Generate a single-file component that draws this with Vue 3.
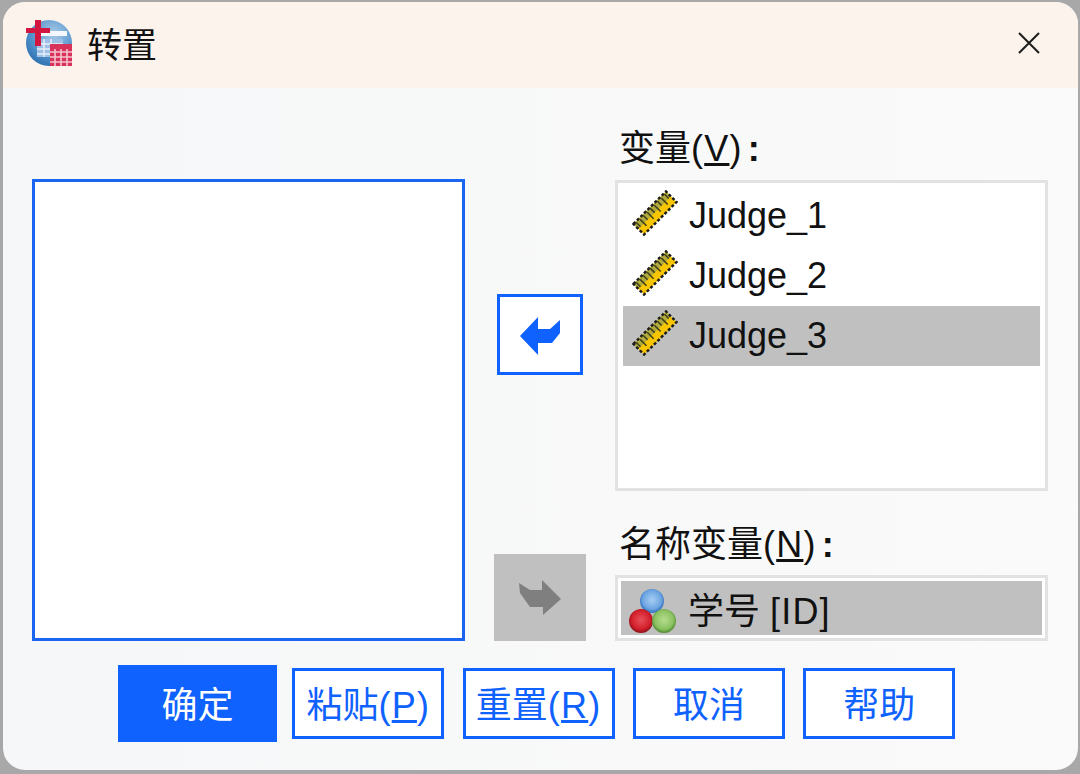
<template>
  <div class="window">
    <!-- title bar -->
    <header class="title-bar">
      <svg class="app-icon" width="48" height="48" viewBox="0 0 48 48">
        <defs>
          <radialGradient id="globe" cx="0.6" cy="0.3" r="0.85">
            <stop offset="0" stop-color="#a9cbe8" />
            <stop offset="0.6" stop-color="#4d8fc9" />
            <stop offset="1" stop-color="#1f5fa3" />
          </radialGradient>
        </defs>
        <circle cx="24" cy="24" r="23" fill="url(#globe)" />
        <rect x="14" y="12" width="28" height="5" fill="#f4f7fb" />
        <rect x="12" y="20" width="26" height="18" fill="#9fc0e6" />
        <path d="M12 25h26M12 30h26M12 35h26M19 20v18M26 20v18" stroke="#e6eff9" stroke-width="1.5" />
        <rect x="1" y="9" width="24" height="5" fill="#d3163f" />
        <rect x="10" y="1" width="6" height="26" fill="#d3163f" />
        <rect x="25" y="25" width="22" height="22" fill="#d8315a" />
        <path d="M25 33h22M25 38h22M25 43h22M30 30v17M36 30v17M42 30v17" stroke="#f6c3cf" stroke-width="1.6" />
      </svg>
      <span class="title">转置</span>
      <svg class="close" width="24" height="24" viewBox="0 0 24 24">
        <path d="M2 2 22 22M22 2 2 22" stroke="#1c1c1c" stroke-width="2" fill="none" />
      </svg>
    </header>

    <!-- main area -->
    <main class="main">
      <div class="target-list"></div>

      <div class="move-col">
        <button class="move-btn" type="button">
          <svg width="40" height="40" viewBox="0 0 40 40">
            <polygon points="0,21 18,2 18,14 30,14 40,5 40,18 32,28 18,28 18,40" fill="#0f62fe" />
          </svg>
        </button>
        <button class="move-btn disabled" type="button">
          <svg width="42" height="36" viewBox="0 0 42 36">
            <polygon points="0,3 11,10 23,10 23,0 42,19 24,35 24,27 11,27 1,13" fill="#7f7f7f" />
          </svg>
        </button>
      </div>

      <div class="source-col">
        <label class="field-label">变量<span class="mnemonic">(<u>V</u>)</span><b class="colon">:</b></label>
        <ul class="var-list">
          <li v-for="name in variables" :key="name" class="var-row" :class="{ selected: name === selected }">
            <svg class="ruler" width="46" height="46" viewBox="0 0 46 46">
              <g transform="rotate(-45 23 23)">
                <rect x="0" y="15.5" width="46" height="15" fill="#f7c600" />
                <rect x="0" y="15.5" width="46" height="7" fill="#b0ab3c" />
                <path d="M3 22.5v-6M8 26v-9M13 22.5v-6M18 26v-9M23 22.5v-6M28 26v-9M33 22.5v-6M38 26v-9M43 22.5v-6" stroke="#3c3c1c" stroke-width="1.5" />
                <rect x="0" y="15.5" width="46" height="15" fill="none" stroke="#1d1d1d" stroke-width="2.5" stroke-dasharray="3 2" />
              </g>
            </svg>
            <span>{{ name }}</span>
          </li>
        </ul>
        <label class="field-label name-label">名称变量<span class="mnemonic">(<u>N</u>)</span><b class="colon">:</b></label>
        <div class="name-box">
          <div class="name-value">
            <svg class="balls" width="50" height="52" viewBox="0 0 50 52">
              <defs>
                <radialGradient id="ballBlue" cx="0.5" cy="0.45" r="0.55">
                  <stop offset="0" stop-color="#a5cdf3" />
                  <stop offset="0.7" stop-color="#6ea6e2" />
                  <stop offset="1" stop-color="#2c6cb8" />
                </radialGradient>
                <radialGradient id="ballRed" cx="0.5" cy="0.45" r="0.55">
                  <stop offset="0" stop-color="#e8505a" />
                  <stop offset="0.7" stop-color="#d3202c" />
                  <stop offset="1" stop-color="#8e1018" />
                </radialGradient>
                <radialGradient id="ballGreen" cx="0.5" cy="0.45" r="0.55">
                  <stop offset="0" stop-color="#b4dc8c" />
                  <stop offset="0.7" stop-color="#8cc262" />
                  <stop offset="1" stop-color="#4e8a30" />
                </radialGradient>
              </defs>
              <circle cx="24" cy="19" r="12" fill="url(#ballBlue)" />
              <circle cx="13" cy="39" r="12" fill="url(#ballRed)" />
              <circle cx="36" cy="39" r="12" fill="url(#ballGreen)" />
            </svg>
            <span>学号 <span class="mnemonic">[ID]</span></span>
          </div>
        </div>
      </div>
    </main>

    <!-- buttons -->
    <footer class="footer">
      <button class="btn primary" type="button">确定</button>
      <button class="btn" type="button">粘贴<span class="mnemonic">(<u>P</u>)</span></button>
      <button class="btn" type="button">重置<span class="mnemonic">(<u>R</u>)</span></button>
      <button class="btn" type="button">取消</button>
      <button class="btn" type="button">帮助</button>
    </footer>
  </div>
</template>

<script setup>
import { ref } from 'vue'

const variables = ref(['Judge_1', 'Judge_2', 'Judge_3'])
const selected = ref('Judge_3')
</script>

<style>
html,
body {
  margin: 0;
  background: #a8a8a8;
  overflow: hidden;
}
</style>

<style scoped>
.window {
  box-sizing: border-box;
  width: 1075px;
  height: 768px;
  margin: 2px 0 0 3px;
  border-radius: 22px;
  overflow: hidden;
  background: linear-gradient(90deg, #f6f7f8, #fafafa);
  color: #111;
  font-family: "Liberation Sans", "Noto Sans CJK SC", sans-serif;
  font-size: 36px;
  display: flex;
  flex-direction: column;
}

.title-bar {
  height: 86px;
  flex: none;
  display: flex;
  align-items: center;
  padding: 0 37px 0 22px;
  background: #fbf3ec;
}

.app-icon {
  flex: none;
  margin-top: -5px;
}

.title {
  margin: -5px 0 0 14px;
  font-size: 35px;
}

.close {
  margin: -4px 0 0 auto;
  width: 24px;
  height: 24px;
}

.main {
  display: grid;
  grid-template-columns: 433px 150px 433px;
  align-items: end;
  padding: 42px 0 0 29px;
}

.target-list {
  box-sizing: border-box;
  height: 462px;
  background: #fff;
  border: 3px solid #1a66f0;
}

.move-col {
  height: 462px;
  display: flex;
  flex-direction: column;
  align-items: center;
  justify-content: space-between;
  padding-top: 115px;
  box-sizing: border-box;
}

.move-btn {
  box-sizing: border-box;
  width: 86px;
  height: 81px;
  padding: 0;
  display: flex;
  align-items: center;
  justify-content: center;
  background: #fff;
  border: 3px solid #0f62fe;
}

.move-btn.disabled {
  width: 92px;
  height: 87px;
  background: #c0c0c0;
  border: none;
}

.source-col {
  display: flex;
  flex-direction: column;
}

.field-label {
  height: 50px;
  line-height: 38px;
  padding-left: 4px;
}

.name-label {
  height: 84px;
  padding-top: 35px;
  box-sizing: border-box;
}

.mnemonic {
  letter-spacing: 1.2px;
}

.colon {
  margin-left: 5px;
}

.var-list {
  box-sizing: border-box;
  height: 311px;
  margin: 0;
  padding: 3px 5px;
  list-style: none;
  background: #fff;
  border: 3px solid #e2e2e2;
}

.var-row {
  height: 60px;
  display: flex;
  align-items: center;
  padding-left: 9px;
}

.var-row.selected {
  background: #c0c0c0;
}

.ruler {
  flex: none;
  margin: -6px 11px 0 0;
}

.name-box {
  box-sizing: border-box;
  height: 66px;
  padding: 3px;
  background: #fff;
  border: 3px solid #e2e2e2;
}

.name-value {
  height: 100%;
  display: flex;
  align-items: center;
  padding-left: 7px;
  background: #c0c0c0;
}

.balls {
  flex: none;
  margin-right: 10px;
}

.footer {
  display: flex;
  align-items: center;
  gap: 18.33px;
  padding: 24px 0 0 115px;
}

.btn {
  box-sizing: border-box;
  width: 152px;
  height: 71px;
  padding: 0 0 4px;
  background: #fff;
  border: 3px solid #0f62fe;
  color: #0f62fe;
  font: inherit;
}

.btn.primary {
  width: 159px;
  height: 77px;
  margin-right: -3px;
  background: #0f62fe;
  color: #fff;
  border: none;
}
</style>
